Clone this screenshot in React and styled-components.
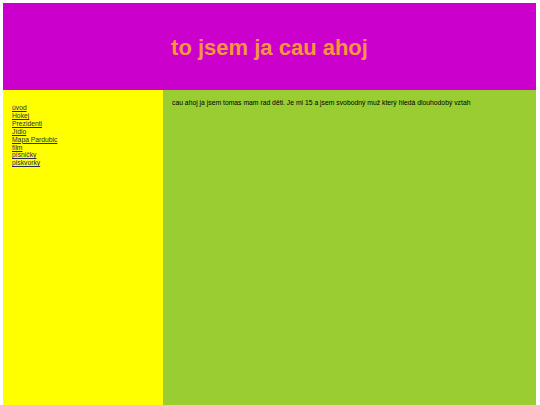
import styled, { createGlobalStyle } from 'styled-components';

const GlobalStyle = createGlobalStyle`
    html, body {
        margin: 0;
        padding: 0;
        background: #ffffff;
    }
    body {
        padding: 3px 4px 0 3px;
        font-family: "Liberation Sans", Arial, sans-serif;
    }
`;

const Page = styled.div`
    display: grid;
    grid-template-columns: 160px 1fr;
    grid-template-rows: 87px 315px;
`;

const Header = styled.header`
    grid-column: 1 / 3;
    background: #cc00cc;
    display: flex;
    align-items: center;
    justify-content: center;
    & > h1 {
        margin: 0;
        font-size: 22px;
        font-weight: 700;
        color: #f7963a;
        transform: translateY(1px);
    }
`;

const Sidebar = styled.nav`
    background: #ffff00;
    padding: 14px 9px;
    display: flex;
    flex-direction: column;
    align-items: flex-start;
`;

const NavLink = styled.a`
    font-size: 6.75px;
    line-height: 7.9px;
    color: #2a2a55;
    text-decoration: underline;
`;

const Content = styled.main`
    background: #9acd32;
    padding: 9px 9px;
    & > p {
        margin: 0;
        font-size: 6.8px;
        line-height: 7.8px;
        color: #000;
    }
`;

const links = ['úvod', 'Hokej', 'Prezidenti', 'Jídlo', 'Mapa Pardubic', 'film', 'písničky', 'piskvorky'];

export default function App() {
    return (
        <>
            <GlobalStyle />
            <Page>
                <Header>
                    <h1>to jsem ja cau ahoj</h1>
                </Header>
                <Sidebar>
                    {links.map((l) => (
                        <NavLink key={l} href="#">{l}</NavLink>
                    ))}
                </Sidebar>
                <Content>
                    <p>cau ahoj ja jsem tomas mam rad děti. Je mi 15 a jsem svobodný muž který hledá dlouhodobý vztah</p>
                </Content>
            </Page>
        </>
    );
}
